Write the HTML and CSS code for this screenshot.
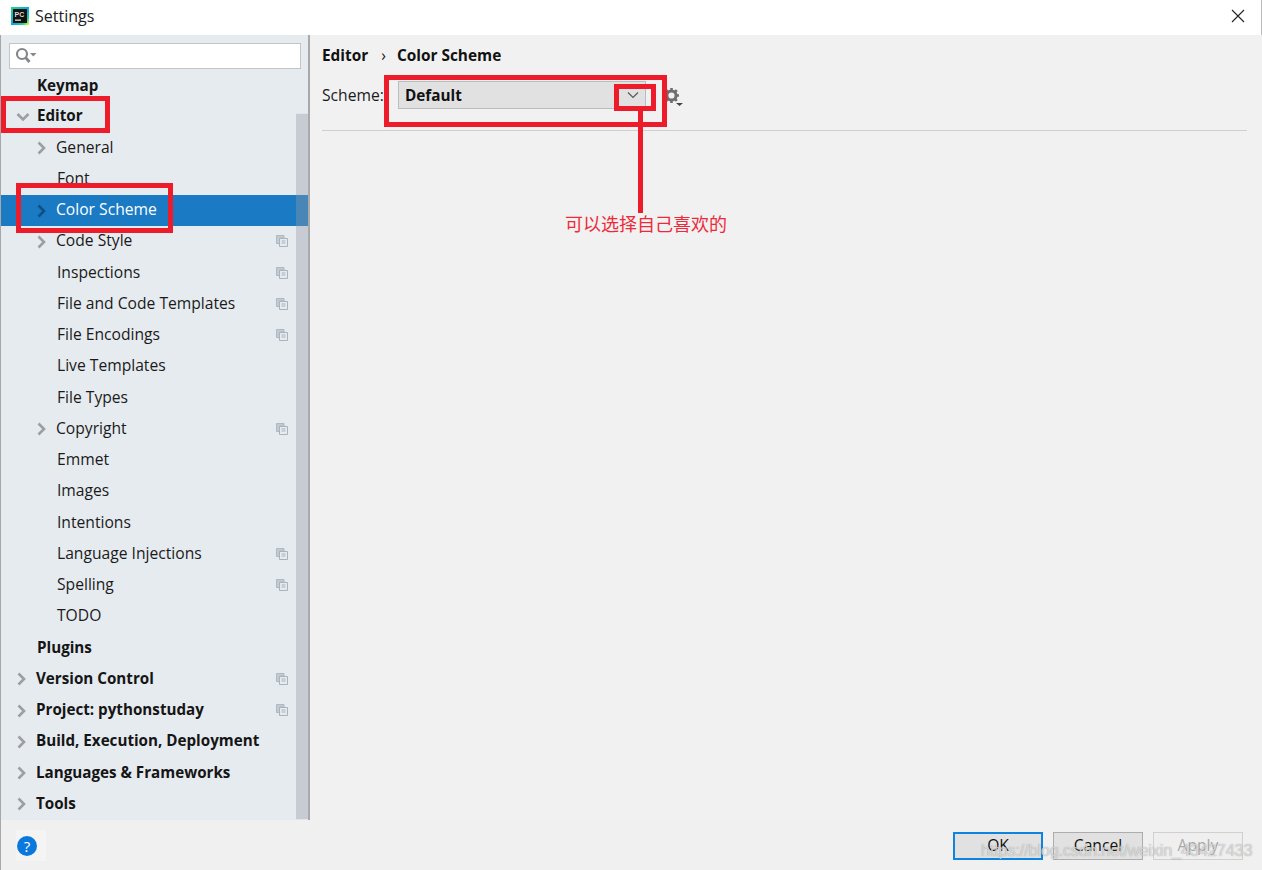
FILE: index.html
```html
<!DOCTYPE html>
<html lang="en">
<head>
<meta charset="utf-8">
<title>Settings</title>
<link rel="stylesheet" href="styles.css">
</head>
<body>
<svg class="defs" width="0" height="0" aria-hidden="true">
  <symbol id="chev-r" viewBox="0 0 10 14"><path d="M2.500 1.500 8 7 2.500 12.500" fill="none" stroke="currentColor" stroke-width="2.600"/></symbol>
  <symbol id="chev-d" viewBox="0 0 14 10"><path d="M1.500 2 7 7.500 12.500 2" fill="none" stroke="currentColor" stroke-width="2.600"/></symbol>
  <symbol id="copy" viewBox="0 0 12 12"><path d="M.5.5h7.500v2.500H3.500v5.500H.5z" fill="#c3cbd2" stroke="#b0b8c0"/><path d="M3.500 3.500h8v8h-8z" fill="#e6ebf0" stroke="#a9b3bb"/><path d="M5.500 6h4M5.500 8h4" stroke="#a9b3bb"/></symbol>
</svg>
<div class="window">
  <header class="titlebar">
    <svg class="logo" width="18" height="18" viewBox="0 0 18 18">
      <defs><linearGradient id="lg" x1="0" y1="0" x2="1" y2="1"><stop offset="0" stop-color="#21d789"/><stop offset=".55" stop-color="#07a8e8"/><stop offset=".8" stop-color="#21d789"/><stop offset="1" stop-color="#fcf84a"/></linearGradient></defs>
      <rect width="18" height="18" fill="url(#lg)"/>
      <rect x="2" y="2" width="14" height="14" fill="#111"/>
      <text x="3.500" y="9.500" class="logo-text">PC</text>
      <rect x="4" y="12.500" width="6" height="1.300" fill="#ddd"/>
    </svg>
    <span class="title">Settings</span>
    <svg class="close" width="14" height="14" viewBox="0 0 14 14"><path d="M1 1 13 13M13 1 1 13" stroke="#222" stroke-width="1.100"/></svg>
  </header>
  <div class="main">
    <aside class="sidebar">
      <div class="search">
        <svg width="22" height="18" viewBox="0 0 22 18"><circle cx="7" cy="7" r="5" fill="none" stroke="#85888b" stroke-width="2.200"/><path d="M10.500 10.500 14.500 15" stroke="#85888b" stroke-width="2.800"/><path d="M15 6h6.500l-3.200 3.500z" fill="#85888b"/></svg>
      </div>
      <nav class="tree">
        <div class="row top first"><span class="label">Keymap</span></div>
        <div class="row top"><svg class="arrow down"><use href="#chev-d"/></svg><span class="label">Editor</span></div>
        <div class="row sub"><svg class="arrow"><use href="#chev-r"/></svg><span class="label">General</span></div>
        <div class="row leaf"><span class="label">Font</span></div>
        <div class="row sub selected"><svg class="arrow"><use href="#chev-r"/></svg><span class="label">Color Scheme</span></div>
        <div class="row sub"><svg class="arrow"><use href="#chev-r"/></svg><span class="label">Code Style</span><svg class="copy"><use href="#copy"/></svg></div>
        <div class="row leaf"><span class="label">Inspections</span><svg class="copy"><use href="#copy"/></svg></div>
        <div class="row leaf"><span class="label">File and Code Templates</span><svg class="copy"><use href="#copy"/></svg></div>
        <div class="row leaf"><span class="label">File Encodings</span><svg class="copy"><use href="#copy"/></svg></div>
        <div class="row leaf"><span class="label">Live Templates</span></div>
        <div class="row leaf"><span class="label">File Types</span></div>
        <div class="row sub"><svg class="arrow"><use href="#chev-r"/></svg><span class="label">Copyright</span><svg class="copy"><use href="#copy"/></svg></div>
        <div class="row leaf"><span class="label">Emmet</span></div>
        <div class="row leaf"><span class="label">Images</span></div>
        <div class="row leaf"><span class="label">Intentions</span></div>
        <div class="row leaf"><span class="label">Language Injections</span><svg class="copy"><use href="#copy"/></svg></div>
        <div class="row leaf"><span class="label">Spelling</span><svg class="copy"><use href="#copy"/></svg></div>
        <div class="row leaf"><span class="label">TODO</span></div>
        <div class="row top"><span class="label">Plugins</span></div>
        <div class="row top"><svg class="arrow"><use href="#chev-r"/></svg><span class="label">Version Control</span><svg class="copy"><use href="#copy"/></svg></div>
        <div class="row top"><svg class="arrow"><use href="#chev-r"/></svg><span class="label">Project: pythonstuday</span><svg class="copy"><use href="#copy"/></svg></div>
        <div class="row top"><svg class="arrow"><use href="#chev-r"/></svg><span class="label">Build, Execution, Deployment</span></div>
        <div class="row top"><svg class="arrow"><use href="#chev-r"/></svg><span class="label">Languages &amp; Frameworks</span></div>
        <div class="row top"><svg class="arrow"><use href="#chev-r"/></svg><span class="label">Tools</span></div>
      </nav>
      <div class="scrollbar"></div>
    </aside>
    <section class="content">
      <div class="crumbs"><span>Editor</span><span class="sep">›</span><span>Color Scheme</span></div>
      <div class="scheme">
        <span class="scheme-label">Scheme:</span>
        <div class="combo">
          <span>Default</span>
          <svg width="12" height="8" viewBox="0 0 12 8"><path d="M1 1.500 6 6.500 11 1.500" fill="none" stroke="#555" stroke-width="1.100"/></svg>
        </div>
        <svg class="gear" width="19" height="18" viewBox="0 0 19 18">
          <circle cx="7.500" cy="7.500" r="4.600" fill="none" stroke="#6e6e6e" stroke-width="3"/>
          <path d="M7.500 0v15M0 7.500h15M2.200 2.200 12.800 12.800M12.800 2.200 2.200 12.800" stroke="#6e6e6e" stroke-width="2.600" stroke-dasharray="2.600 9.800 2.600"/>
          <path d="M12 15h7l-3.500 3z" fill="#444"/>
        </svg>
      </div>
      <hr class="rule">
    </section>
  </div>
  <footer class="footer">
    <div class="help-wrap"><span class="help">?</span></div>
    <div class="buttons">
      <button class="btn default">OK</button>
      <button class="btn">Cancel</button>
      <button class="btn disabled">Apply</button>
    </div>
  </footer>

  <div class="mark mark-editor"></div>
  <div class="mark mark-color"></div>
  <div class="mark mark-scheme"></div>
  <div class="mark mark-arrow"></div>
  <div class="mark-line"></div>
  <div class="note">可以选择自己喜欢的</div>
  <div class="watermark">https://blog.csdn.net/weixin_43427433</div>
</div>
</body>
</html>
```
FILE: styles.css
```css
* { box-sizing: border-box; }
html, body { margin: 0; height: 100%; }
body { font-family: "Open Sans", "Noto Sans", "Liberation Sans", sans-serif; font-size: 15.65px; color: #1a1a1a; overflow: hidden; }
.defs { position: absolute; }
.window { position: relative; width: 1262px; height: 870px; display: flex; flex-direction: column; background: #f0f0f0; }

.titlebar { height: 35px; background: #fff; display: flex; align-items: center; padding: 0 16px 3px 11px; border-right: 1px solid #bbb; }
.logo { margin-right: 6px; }
.logo-text { font: 700 7px "Liberation Sans", sans-serif; fill: #ddd; }
.title { font-size: 16px; color: #222; }
.close { margin-left: auto; }

.main { flex: 1; display: flex; min-height: 0; }
.sidebar { position: relative; width: 310px; background: #e6ebf0; border-left: 1px solid #a8a8a8; border-right: 2px solid #a9a9a9; padding-top: 8px; }
.search { margin: 0 7px 0 8px; height: 26px; width: 292px; background: #fff; border: 1px solid #c2c4c6; display: flex; align-items: center; padding-left: 5px; }
.tree { margin-top: 1px; }
.row { height: 31.25px; display: flex; align-items: center; padding-right: 20px; white-space: nowrap; position: relative; }
.label { line-height: 20px; position: relative; top: -1.4px; }
.row.first .label { top: -.8px; }
.row.top { font-weight: 700; padding-left: 15px; color: #151515; }
.row.top:not(:has(.arrow)) { padding-left: 36px; }
.row.top .label { font-size: 15.2px; }
.row.sub { padding-left: 35px; }
.row.leaf { padding-left: 56px; }
.arrow { width: 10px; height: 14px; color: #9c9fa2; margin-right: 10px; flex: none; }
.arrow.down { width: 14px; height: 10px; margin-right: 7px; }
.copy { width: 12px; height: 12px; position: absolute; left: 275px; top: 9px; }
.selected { background: #1a7ac4; color: #fff; }
.selected .arrow { color: #0f4f82; }
.scrollbar { position: absolute; top: 78px; right: 0; bottom: 0; width: 12px; background: rgba(150,155,165,.38); border-top: 1px solid #e2e4e6; border-bottom: 1px solid #e2e4e6; }

.content { flex: 1; background: #f1f1f1; padding: 9px 15px 0 12px; }
.crumbs { display: flex; align-items: center; height: 22px; font-weight: 700; font-size: 15.4px; color: #111; }
.sep { margin: 0 11px 0 13px; font-weight: 400; }
.scheme { display: flex; align-items: center; margin-top: 14px; height: 30px; }
.scheme-label { width: 76px; }
.combo { width: 248px; height: 28px; background: #e1e1e1; border: 1px solid #bcbcbc; display: flex; align-items: center; justify-content: space-between; padding: 0 6px 0 6px; font-weight: 700; font-size: 15.3px; color: #111; margin-right: 19px; }
.gear { margin: 3px 0 0 -1px; }
.rule { margin: 20px 0 0; border: 0; border-top: 1px solid #cfcfcf; }

.footer { height: 50px; background: #f0f0f0; display: flex; align-items: flex-start; justify-content: space-between; padding: 12px 19px 0 16px; border-left: 1px solid #a8a8a8; }
.help-wrap { width: 30px; height: 31px; margin: -2px 0 0 -1px; background: #f4f4f4; display: flex; align-items: center; padding-left: 1px; }
.help { width: 20px; height: 20px; border-radius: 50%; background: #0b78dc; color: #fff; font-size: 15px; line-height: 20px; text-align: center; }
.buttons { display: flex; gap: 10px; }
.btn { width: 90px; height: 28px; background: #e1e1e1; border: 1px solid #adadad; font: 15.65px "Open Sans", "Noto Sans", sans-serif; color: #111; padding: 0 0 2px; }
.btn.default { border: 2px solid #0f83e0; }
.btn.disabled { background: #efefef; border-color: #d0d0d0; color: #a8a8a8; }

.mark { position: absolute; border: 5px solid #ed1c2a; }
.mark-editor { left: 1px; top: 96px; width: 109px; height: 37px; }
.mark-color { left: 16px; top: 183px; width: 157px; height: 50px; }
.mark-scheme { left: 384px; top: 75px; width: 283px; height: 52px; }
.mark-arrow { left: 614px; top: 84px; width: 42px; height: 27px; }
.mark-line { position: absolute; left: 638px; top: 111px; width: 5px; height: 102px; background: #ed1c2a; }
.note { position: absolute; left: 565px; top: 211px; font: 18px/24px "Noto Sans CJK SC", sans-serif; color: #ee2a3a; white-space: nowrap; }
.watermark { position: absolute; left: 981px; top: 840px; font: 16.5px/20px "Liberation Sans", sans-serif; letter-spacing: -.25px; color: rgba(255,255,255,.6); text-shadow: 0 0 1px rgba(110,110,110,.75); white-space: nowrap; }
```
